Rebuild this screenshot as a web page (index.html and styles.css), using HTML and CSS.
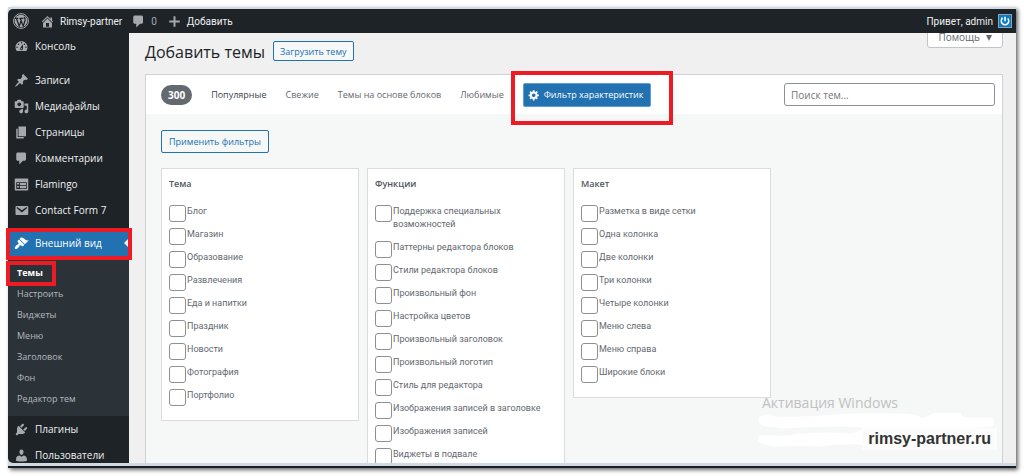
FILE: index.html
```html
<!DOCTYPE html>
<html lang="ru">
<head>
<meta charset="utf-8">
<title>Добавить темы</title>
<link rel="stylesheet" href="styles.css">
</head>
<body>
<div class="frame">
<div class="window">
  <header class="toolbar">
    <a class="tb-item" href="#" aria-label="WordPress"><svg class="wp-logo" viewBox="0 0 20 20"><circle cx="10" cy="10" r="9.3" fill="none" stroke="currentColor" stroke-width="1.2"/><circle cx="10" cy="10" r="7.9" fill="currentColor"/><path d="M2.5 6.6h4.2M8 6.6h5M4.3 6.8l3.5 9.6 2.5-7.2M9.2 6.8l3.6 9.6 2.4-7.4c.5-1.7-1.3-2.4-.9-4.2" fill="none" stroke="#1d2327" stroke-width="1.6"/></svg></a>
    <a class="tb-item tb-site" href="#"><svg class="icon" viewBox="0 0 20 20"><path d="M16 8.5l1.53 1.53-1.06 1.06L10 4.6l-6.47 6.49-1.06-1.06L10 2.5l4 4v-2h2v4zm-6-2.46l6 5.99V18H4v-5.97zM12 17v-5H8v5h4z"/></svg>Rimsy-partner</a>
    <a class="tb-item tb-comments" href="#"><svg class="icon" viewBox="0 0 20 20"><path d="M5 2h9c1.1 0 2 .9 2 2v7c0 1.1-.9 2-2 2h-2l-5 5v-5H5c-1.1 0-2-.9-2-2V4c0-1.1.9-2 2-2z"/></svg><span class="muted">0</span></a>
    <a class="tb-item tb-new" href="#"><svg class="icon" viewBox="0 0 20 20"><path d="M17 8.7v2.6h-5.7V17H8.700v-5.700H3V8.700h5.700V3h2.600v5.700z"/></svg>Добавить</a>
    <a class="tb-item tb-user" href="#">Привет, admin<svg class="avatar" viewBox="0 0 14 14"><rect x=".5" y=".5" width="13" height="13" fill="#0b7cc4" stroke="#8fa3b0"/><path d="M4.300 4.500a3.700 3.700 0 1 0 5.400 0M7 2.800v4.400M4 3.500v2" fill="none" stroke="#fff" stroke-width="1.600"/></svg></a>
  </header>
  <div class="layout">
    <nav class="menu">
      <a class="menu-item" href="#"><svg class="icon" viewBox="0 0 20 20"><path d="M3.76 16h12.48c1.1-1.37 1.76-3.11 1.76-5 0-4.42-3.58-8-8-8s-8 3.58-8 8c0 1.89.66 3.63 1.76 5zM10 4c.55 0 1 .45 1 1s-.45 1-1 1-1-.45-1-1 .45-1 1-1zM6 6c.55 0 1 .45 1 1s-.45 1-1 1-1-.45-1-1 .45-1 1-1zm8 0c.55 0 1 .45 1 1s-.45 1-1 1-1-.45-1-1 .45-1 1-1zm-5.370 5.550L12 7v6c0 1.100-.9 2-2 2s-2-.9-2-2c0-.57.24-1.080.63-1.450zM4 10c.55 0 1 .45 1 1s-.45 1-1 1-1-.45-1-1 .45-1 1-1zm12 0c.55 0 1 .45 1 1s-.45 1-1 1-1-.45-1-1 .45-1 1-1zm-5 3c0-.55-.45-1-1-1s-1 .45-1 1 .45 1 1 1 1-.45 1-1z"/></svg>Консоль</a>
      <div class="sep"></div>
      <a class="menu-item" href="#"><svg class="icon" viewBox="0 0 20 20"><path d="M10.44 3.02l1.82-1.82 6.36 6.35-1.83 1.82c-1.05-.68-2.48-.57-3.41.36l-.75.75c-.92.93-1.04 2.35-.35 3.41l-1.83 1.82-2.41-2.41-2.8 2.79c-.42.42-3.38 2.71-3.8 2.29s1.86-3.39 2.28-3.81l2.79-2.79L4.1 9.36l1.83-1.82c1.05.69 2.48.57 3.4-.36l.75-.75c.93-.92 1.05-2.35.36-3.41z"/></svg>Записи</a>
      <a class="menu-item" href="#"><svg class="icon" viewBox="0 0 20 20"><path d="M13 11V4c0-.55-.45-1-1-1h-1.67L9 1H5L3.67 3H2c-.55 0-1 .45-1 1v7c0 .55.45 1 1 1h10c.55 0 1-.45 1-1zM7 4.500c1.380 0 2.500 1.120 2.500 2.500S8.380 9.500 7 9.500 4.500 8.380 4.500 7 5.620 4.500 7 4.500zM14 6h5v10.500c0 1.380-1.120 2.500-2.500 2.500S14 17.880 14 16.500s1.120-2.500 2.500-2.500c.17 0 .34.02.5.05V9h-3V6zm-4 8.050V13h2v3.500c0 1.380-1.120 2.500-2.500 2.500S7 17.880 7 16.500 8.120 14 9.500 14c.17 0 .34.02.5.05z"/></svg>Медиафайлы</a>
      <a class="menu-item" href="#"><svg class="icon" viewBox="0 0 20 20"><path d="M6 15V2h10v13H6zm-1 1h8v2H3V5h2v11z"/></svg>Страницы</a>
      <a class="menu-item" href="#"><svg class="icon" viewBox="0 0 20 20"><path d="M5 2h9c1.1 0 2 .9 2 2v7c0 1.1-.9 2-2 2h-2l-5 5v-5H5c-1.1 0-2-.9-2-2V4c0-1.1.9-2 2-2z"/></svg>Комментарии</a>
      <a class="menu-item" href="#"><svg class="icon" viewBox="0 0 20 20"><path d="M2 2h16c.55 0 1 .45 1 1v14c0 .55-.45 1-1 1H2c-.55 0-1-.45-1-1V3c0-.55.45-1 1-1zm15 14V7H3v9h14zM4 8v2h3V8H4zm4 0v3h8V8H8zm-4 4v2h3v-2H4zm4 0v3h8v-3H8z"/></svg>Flamingo</a>
      <a class="menu-item" href="#"><svg class="icon" viewBox="0 0 20 20"><path d="M3.870 4h13.250C18.370 4 19 4.590 19 5.790v8.420c0 1.190-.63 1.790-1.880 1.790H3.870c-1.250 0-1.880-.6-1.880-1.790V5.790c0-1.200.63-1.790 1.880-1.790zm6.620 8.600l6.740-5.530c.24-.2.43-.66.13-1.070-.29-.41-.82-.42-1.170-.17l-5.700 3.860L4.800 5.830c-.35-.25-.88-.24-1.170.17-.3.41-.11.87.13 1.070z"/></svg>Contact Form 7</a>
      <div class="sep"></div>
      <a class="menu-item current" href="#"><svg class="icon" viewBox="0 0 20 20"><path d="M14.48 11.06L7.41 3.99l1.5-1.5c.5-.56 2.3-.47 3.51.32 1.21.8 1.43 1.28 2.91 2.1 1.18.64 2.45 1.26 4.45.85zm-.71.71L6.7 4.7 4.93 6.47c-.39.39-.39 1.02 0 1.41l1.06 1.06c.39.39.39 1.03 0 1.42-.6.6-1.43 1.11-2.21 1.69-.35.26-.7.53-1.01.84C1.43 14.23.4 16.08 1.4 17.07c.99 1 2.84-.03 4.18-1.36.31-.31.58-.66.85-1.02.57-.78 1.08-1.61 1.69-2.21.39-.39 1.02-.39 1.41 0l1.06 1.06c.39.39 1.02.39 1.41 0z"/></svg>Внешний вид<span class="arrow"></span><span class="mark mark-current"></span></a>
      <div class="submenu">
        <a class="active" href="#">Темы<span class="mark mark-sub"></span></a>
        <a href="#">Настроить</a>
        <a href="#">Виджеты</a>
        <a href="#">Меню</a>
        <a href="#">Заголовок</a>
        <a href="#">Фон</a>
        <a href="#">Редактор тем</a>
      </div>
      <a class="menu-item" href="#"><svg class="icon" viewBox="0 0 20 20"><path d="M13.11 4.36L9.87 7.6 8 5.73l3.24-3.24c.35-.34 1.05-.2 1.56.32.52.51.66 1.21.31 1.55zm-8 1.77l.91-1.12 9.01 9.01-1.19.84c-.71.71-2.63 1.16-3.82 1.16H6.14L4.9 17.26c-.59.59-1.54.59-2.12 0-.59-.58-.59-1.53 0-2.12l1.24-1.24v-3.88c0-1.13.4-3.19 1.09-3.89zm7.26 3.97l3.24-3.24c.34-.35 1.04-.21 1.55.31.52.51.66 1.21.31 1.55l-3.24 3.25z"/></svg>Плагины</a>
      <a class="menu-item" href="#"><svg class="icon" viewBox="0 0 20 20"><path d="M10 9.25c-2.27 0-2.73-3.44-2.73-3.44C7 4.02 7.82 2 9.97 2c2.16 0 2.98 2.02 2.71 3.81 0 0-.41 3.44-2.68 3.44zm0 2.57L12.72 10c2.39 0 4.52 2.33 4.52 4.53v2.49s-3.65 1.13-7.24 1.13c-3.65 0-7.24-1.13-7.24-1.13v-2.49c0-2.25 1.94-4.48 4.47-4.48z"/></svg>Пользователи</a>
    </nav>
    <main class="content">
      <div class="heading">
        <h1>Добавить темы</h1>
        <button class="btn btn-small" type="button">Загрузить тему</button>
        <button class="help" type="button">Помощь<span class="caret"></span></button>
      </div>
      <section class="browser">
        <div class="filter-bar">
          <span class="count">300</span>
          <a class="tab tab-current" href="#">Популярные</a>
          <a class="tab" href="#">Свежие</a>
          <a class="tab" href="#">Темы на основе блоков</a>
          <a class="tab" href="#">Любимые</a>
          <div class="feature">
            <button class="btn-primary" type="button"><svg class="gear" viewBox="0 0 20 20"><path d="M18 12h-2.18c-.17.7-.44 1.35-.81 1.93l1.54 1.54-2.1 2.1-1.54-1.54c-.58.36-1.23.63-1.91.79V19H8v-2.18c-.68-.16-1.33-.43-1.91-.79l-1.54 1.54-2.12-2.12 1.54-1.54c-.36-.58-.63-1.23-.79-1.91H1V9.03h2.17c.16-.7.44-1.35.8-1.94L2.43 5.55l2.1-2.1 1.54 1.54c.58-.37 1.24-.64 1.93-.81V2h3v2.18c.68.16 1.33.43 1.91.79l1.54-1.54 2.12 2.12-1.54 1.54c.36.59.64 1.24.8 1.94H18V12zm-8.5 1.5c1.66 0 3-1.34 3-3s-1.34-3-3-3-3 1.34-3 3 1.34 3 3 3z"/></svg>Фильтр характеристик</button>
            <span class="mark mark-feature"></span>
          </div>
          <input class="search" type="search" placeholder="Поиск тем..." aria-label="Поиск тем">
        </div>
        <div class="filters">
          <button class="btn btn-apply" type="button">Применить фильтры</button>
          <div class="groups">
            <fieldset class="group">
              <legend>Тема</legend>
              <label><input type="checkbox"><span>Блог</span></label>
              <label><input type="checkbox"><span>Магазин</span></label>
              <label><input type="checkbox"><span>Образование</span></label>
              <label><input type="checkbox"><span>Развлечения</span></label>
              <label><input type="checkbox"><span>Еда и напитки</span></label>
              <label><input type="checkbox"><span>Праздник</span></label>
              <label><input type="checkbox"><span>Новости</span></label>
              <label><input type="checkbox"><span>Фотография</span></label>
              <label><input type="checkbox"><span>Портфолио</span></label>
            </fieldset>
            <fieldset class="group">
              <legend>Функции</legend>
              <label><input type="checkbox"><span>Поддержка специальных<br>возможностей</span></label>
              <label><input type="checkbox"><span>Паттерны редактора блоков</span></label>
              <label><input type="checkbox"><span>Стили редактора блоков</span></label>
              <label><input type="checkbox"><span>Произвольный фон</span></label>
              <label><input type="checkbox"><span>Настройка цветов</span></label>
              <label><input type="checkbox"><span>Произвольный заголовок</span></label>
              <label><input type="checkbox"><span>Произвольный логотип</span></label>
              <label><input type="checkbox"><span>Стиль для редактора</span></label>
              <label><input type="checkbox"><span>Изображения записей в заголовке</span></label>
              <label><input type="checkbox"><span>Изображения записей</span></label>
              <label><input type="checkbox"><span>Виджеты в подвале</span></label>
            </fieldset>
            <fieldset class="group">
              <legend>Макет</legend>
              <label><input type="checkbox"><span>Разметка в виде сетки</span></label>
              <label><input type="checkbox"><span>Одна колонка</span></label>
              <label><input type="checkbox"><span>Две колонки</span></label>
              <label><input type="checkbox"><span>Три колонки</span></label>
              <label><input type="checkbox"><span>Четыре колонки</span></label>
              <label><input type="checkbox"><span>Меню слева</span></label>
              <label><input type="checkbox"><span>Меню справа</span></label>
              <label><input type="checkbox"><span>Широкие блоки</span></label>
            </fieldset>
          </div>
        </div>
      </section>
    </main>
  </div>
</div>
<div class="watermark">
  <p class="activation">Активация Windows</p>
  <svg class="smudge" viewBox="0 0 240 34"><path d="M2 3q4-4 16-1 30 1 60-2 30-2 60-1 25 0 26 5 8-2 14-6h25q1 4 5 5h26q5 3 2 9-20 2-60 2-20-2-34 1l-24 3q-5 3-12 4v8q-25-1-40 2-30-1-47 0-15-2-17-5-2-5 2-7 15 3 40-1 30-2 52 0 6-4 14-5-8-2-24-2-35 0-60 2-8-2-18-2-8-3-6-9z" fill="#fff"/></svg>
  <p class="site-tag">rimsy-partner.ru</p>
</div>
</div>
</body>
</html>
```
FILE: styles.css
```css
* { box-sizing: border-box; }
html { height: 100%; }
body {
  margin: 0;
  height: 100%;
  padding: 7px 8px 8px;
  background: #fff;
  font-family: "Open Sans", "Noto Sans", sans-serif;
  font-size: 10px;
  color: #3c434a;
  overflow: hidden;
}
a { color: inherit; text-decoration: none; }
button, input { font: inherit; }
svg { display: block; flex: none; fill: currentColor; }

.frame {
  position: relative;
  height: 100%;
  padding: 2px 0 3px;
  background: #cfdae3;
  border-bottom: 2px solid #1b1e24;
  box-shadow: 2px 2px 4px rgba(0, 0, 0, .6);
}
.window {
  height: 100%;
  display: flex;
  flex-direction: column;
  border-radius: 5px 0 0 5px;
  background: #f0f0f1;
}

.toolbar {
  position: relative;
  z-index: 1;
  flex: none;
  display: flex;
  align-items: center;
  height: 24px;
  padding: 0 4px 0 5px;
  border-radius: 5px 0 0 0;
  background: #1d2327;
  color: #f0f0f1;
  font-family: Roboto, "Open Sans", sans-serif;
}
.tb-item { display: flex; align-items: center; gap: 5px; }
.tb-item .icon, .wp-logo, .muted { color: #a7aaad; }
.icon { width: 15px; height: 15px; }
.wp-logo { width: 16px; height: 16px; }
.tb-site { margin-left: 11px; }
.tb-comments { margin-left: 9px; }
.tb-new { margin-left: 10px; }
.tb-user { margin-left: auto; }
.avatar { width: 14px; height: 14px; }

.layout { display: flex; flex: 1; min-height: 0; overflow-x: visible; overflow-y: clip; }
.menu {
  flex: none;
  width: 121px;
  border-radius: 0 0 0 5px;
  background: #1d2327;
  color: #f0f0f1;
}
.menu-item {
  position: relative;
  display: flex;
  align-items: center;
  gap: 6px;
  height: 26px;
  padding-left: 6px;
  white-space: nowrap;
}
.menu-item .icon { color: #a7aaad; }
.sep { height: 8px; }
.sep ~ .sep { height: 7px; }
.current { background: #2271b1; color: #fff; }
.menu .current .icon { color: #fff; }
.arrow {
  margin-left: auto;
  border: 5px solid transparent;
  border-left: 0;
  border-right-color: #f0f0f1;
}
.submenu { padding: 6px 0 7px; background: #2c3338; color: #b4b9be; font-size: 9px; }
.submenu a { position: relative; display: block; padding-left: 9px; line-height: 21px; }
.submenu .active { color: #fff; font-weight: 700; }

.mark { position: absolute; border: 4px solid #ed1c24; pointer-events: none; }
.mark-current { inset: -2px -3px -4px -2px; }
.mark-sub { left: -2px; top: -1px; width: 50px; height: 25px; }
.mark-feature { inset: -12px -22px -18px -12px; }

.content { flex: 1; min-width: 0; display: flex; flex-direction: column; padding: 0 13px 0 16px; }
.heading { flex: none; display: flex; align-items: center; gap: 8px; height: 41px; }
h1 { margin: 0; padding-bottom: 4px; font-size: 16px; font-weight: 400; line-height: 22px; color: #1d2327; }
.btn {
  border: 1px solid #2271b1;
  border-radius: 2px;
  background: #f6f7f7;
  color: #2271b1;
  font-size: 9px;
  white-space: nowrap;
}
.btn-small { height: 20px; margin-bottom: 5px; padding: 0 6px; font-weight: 500; }
.btn-apply { height: 23px; padding: 0 7px; }
.help {
  align-self: flex-start;
  display: flex;
  align-items: flex-end;
  gap: 6px;
  height: 24px;
  margin: -9px 0 0 auto;
  padding: 0 10px 3px;
  border: 1px solid #c3c4c7;
  border-radius: 0 0 3px 3px;
  background: #fff;
  color: #646970;
}
.caret { margin-bottom: 3px; border: 3px solid transparent; border-top: 6px solid #646970; border-bottom: 0; }

.browser { flex: 1; min-height: 0; border: 1px solid #d0d1d4; border-bottom: 0; background: #f6f7f7; }
.filter-bar { display: flex; align-items: center; height: 39px; padding: 0 7px 0 15px; background: #fff; }
.count {
  padding: 0 7px;
  border-radius: 10px;
  background: #646970;
  color: #fff;
  font-weight: 700;
  line-height: 20px;
}
.tab { margin-left: 19px; color: #646970; font-size: 9px; white-space: nowrap; }
.tab-current { color: #3c434a; }
.feature { position: relative; margin-left: 19px; }
.btn-primary {
  display: flex;
  align-items: center;
  gap: 4px;
  height: 24px;
  padding: 0 7px 0 4px;
  border: 1px solid #5b9dd9;
  border-radius: 2px;
  background: #2271b1;
  color: #fff;
  font-size: 9px;
  font-weight: 500;
  white-space: nowrap;
}
.gear { width: 12px; height: 12px; }
.search {
  width: 211px;
  height: 23px;
  margin-left: auto;
  padding: 0 6px;
  border: 1px solid #8c8f94;
  border-radius: 3px;
  background: #fff;
}
.search::placeholder { color: #757575; }

.filters { padding: 16px 15px 0; }
.groups { display: flex; align-items: flex-start; gap: 8px; margin-top: 15px; }
.group {
  flex: 0 1 198px;
  min-width: 0;
  margin: 0;
  padding: 7px 7px 8px;
  border: 1px solid #dcdcde;
  background: #fff;
}
.group legend { float: left; width: 100%; padding: 0; margin-bottom: 13px; font-size: 9px; font-weight: 600; line-height: 16px; color: #50575e; }
.group label {
  clear: both;
  display: flex;
  align-items: flex-start;
  gap: 1px;
  margin-bottom: 10px;
  font: 9px/13px Roboto, "Open Sans", sans-serif;
  color: #646970;
}
.group label:last-child { margin-bottom: 0; padding-bottom: 10px; }
.group input {
  appearance: none;
  flex: none;
  width: 17px;
  height: 17px;
  margin: 0 0 -4px;
  border: 1px solid #8c8f94;
  border-radius: 3px;
  background: #fff;
}

.watermark { position: absolute; right: 19px; bottom: 16px; width: 240px; }
.watermark p { margin: 0; }
.activation { padding-left: 5px; font-size: 14px; line-height: 20px; color: #bfc1c2; }
.smudge { width: 240px; height: 37px; }
.watermark .site-tag {
  position: absolute;
  right: 0;
  bottom: 0;
  padding: 0 6px;
  background: #fcfcfc;
  color: #333;
  font: bold 16px/22px "Liberation Sans", Arial, sans-serif;
}
```
